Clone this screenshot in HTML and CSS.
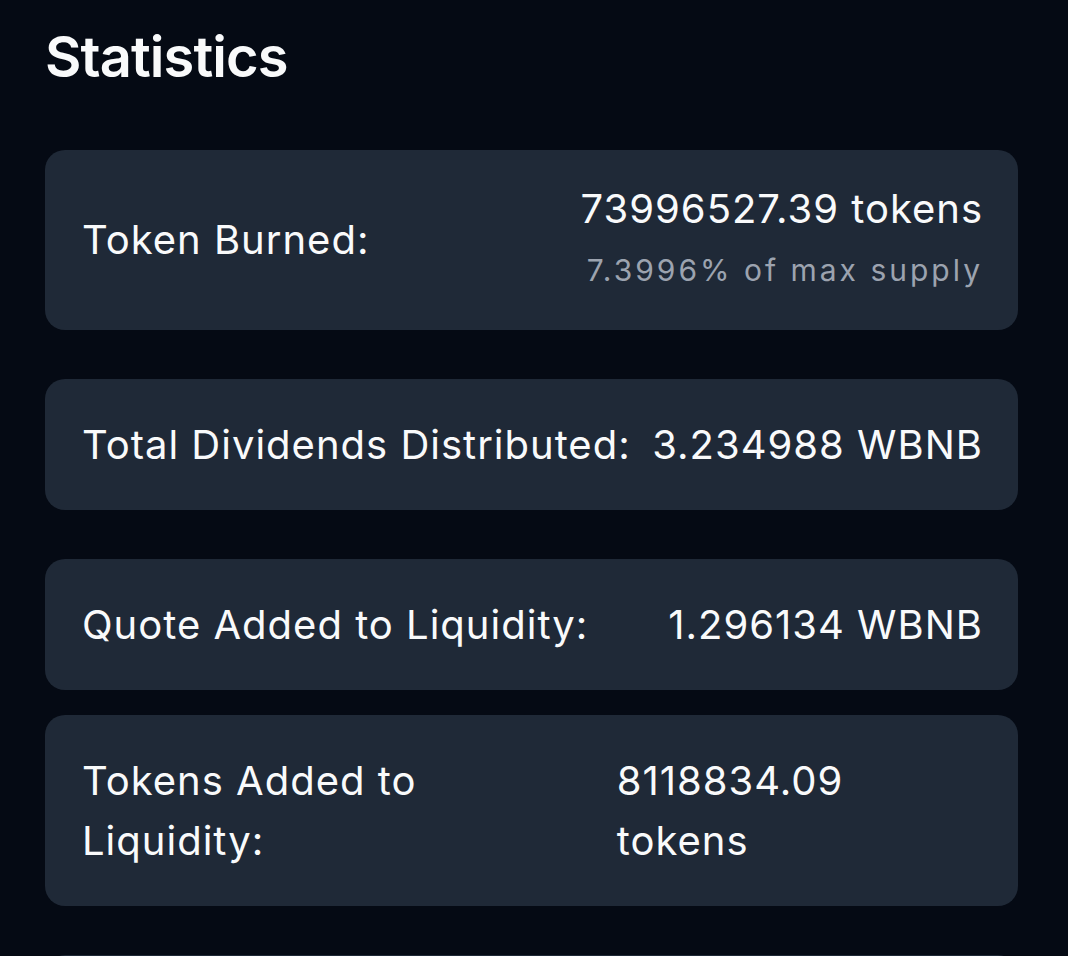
FILE: index.html
```html
<!DOCTYPE html>
<html>
<head>
  <title>Statistics</title>
  <link rel="stylesheet" href="styles.css">
</head>
<body>
  <div class="stats">
    <h2 class="stats-title">Statistics</h2>

    <div class="stat-card stat-card-burn">
      <span class="stat-label">Token Burned:</span>
      <div class="stat-value-group">
        <span class="stat-value">73996527.39 tokens</span>
        <span class="stat-sub">7.3996% of max supply</span>
      </div>
    </div>

    <div class="stat-card">
      <span class="stat-label">Total Dividends Distributed:</span>
      <span class="stat-value">3.234988 WBNB</span>
    </div>

    <div class="stat-card stat-card-tight">
      <span class="stat-label">Quote Added to Liquidity:</span>
      <span class="stat-value">1.296134 WBNB</span>
    </div>

    <div class="stat-card">
      <span class="stat-label">Tokens Added to Liquidity:</span>
      <span class="stat-value">8118834.09 tokens</span>
    </div>

    <div class="stat-card">
      <span class="stat-label">&nbsp;</span>
    </div>
  </div>
</body>
</html>
```

FILE: styles.css
```css
body {
  margin: 0;
  background-color: #050a14;
  color: #f9fafb;
  font-family: Inter, "Noto Sans", sans-serif;
}

.stats {
  padding: 24px 50px 0 45px;
}

.stats-title {
  margin: 0 0 59px 0;
  font-size: 56px;
  font-weight: 600;
  line-height: 67px;
  letter-spacing: -0.9px;
}

.stat-card {
  display: flex;
  justify-content: space-between;
  align-items: center;
  gap: 12px;
  padding: 36px 35px 35px 37px;
  margin-bottom: 49px;
  background-color: #1f2937;
  border-radius: 20px;
  font-size: 40px;
  line-height: 60px;
  letter-spacing: 1px;
}

.stat-card-tight {
  margin-bottom: 25px;
}

.stat-card-burn {
  padding-top: 29px;
  padding-bottom: 29px;
}

.stat-value-group {
  display: flex;
  flex-direction: column;
  align-items: flex-end;
}

.stat-sub {
  color: #9ca3af;
  font-size: 30px;
  line-height: 62px;
  letter-spacing: 3px;
}
```
